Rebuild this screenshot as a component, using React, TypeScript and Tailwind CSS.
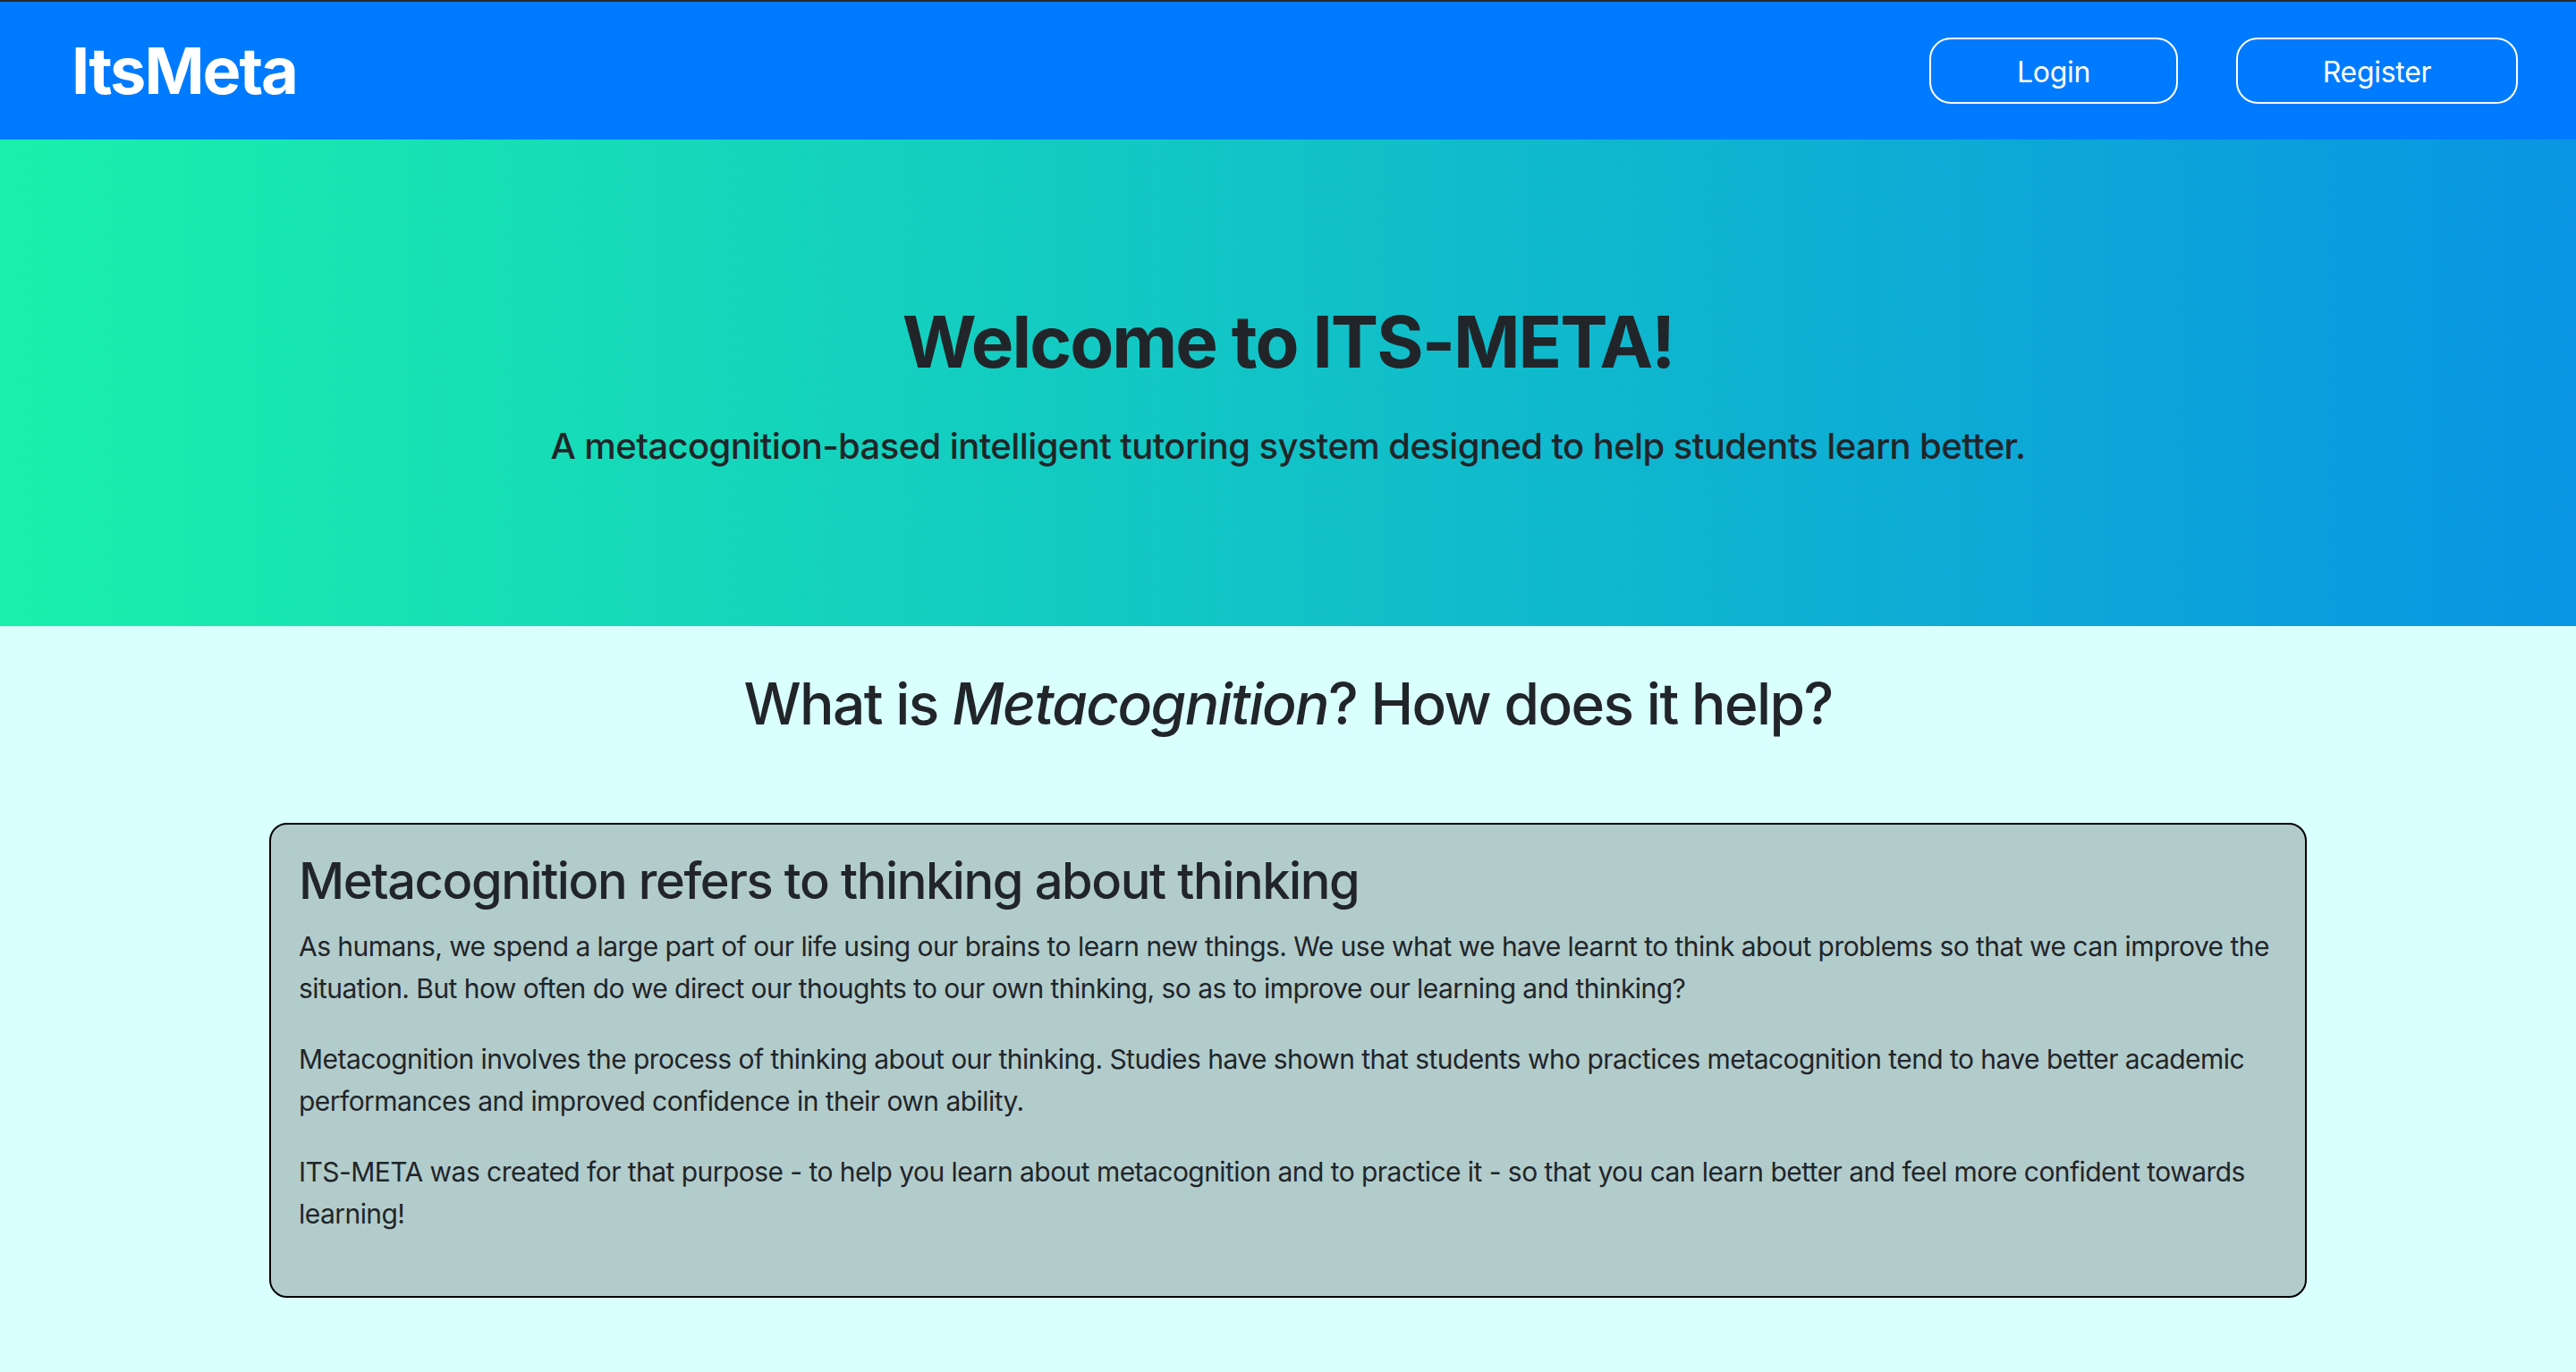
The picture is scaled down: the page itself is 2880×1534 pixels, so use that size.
import React from "react";

export default function App() {
  const font = { fontFamily: "Inter, 'Noto Sans', sans-serif" };
  return (
    <div className="min-h-[1534px] w-full bg-[#d9ffff] text-[#212529]" style={font}>
      <div className="h-[2px] bg-[#2b2b2b]" />
      <header className="flex h-[154px] items-center justify-between bg-[#007bff] pl-[80px] pr-[65px]">
        <div className="text-[72px] font-bold leading-none tracking-[-2px] text-white">ItsMeta</div>
        <div className="flex items-center gap-[65px]">
          <button className="flex h-[74px] w-[278px] items-center justify-center rounded-[24px] border-2 border-white pt-[3px] text-[32px] tracking-[-0.3px] text-white">
            Login
          </button>
          <button className="flex h-[74px] w-[315px] items-center justify-center rounded-[24px] border-2 border-white pt-[3px] text-[32px] tracking-[-0.3px] text-white">
            Register
          </button>
        </div>
      </header>
      <section className="flex h-[544px] flex-col items-center justify-center bg-[linear-gradient(to_right,#1af0ab,#0995e3)]">
        <h1 className="text-[80px] font-bold leading-[96px] tracking-[-2px]">Welcome to ITS-META!</h1>
        <h5 className="mt-[45px] text-[40px] font-medium leading-[48px] tracking-[-0.6px]">
          A metacognition-based intelligent tutoring system designed to help students learn better.
        </h5>
      </section>
      <section className="flex flex-col items-center pt-[48px]">
        <h2 className="text-[64px] font-medium leading-[77px] tracking-[-1.6px]">
          What is <em>Metacognition</em>? How does it help?
        </h2>
        <div className="mt-[95px] w-[2278px] rounded-[20px] border-2 border-black bg-[#b2cccc] px-[31px] pt-[30px] pb-[68px]">
          <h3 className="mb-[16px] text-[56px] font-medium leading-[67px] tracking-[-1.4px]">
            Metacognition refers to thinking about thinking
          </h3>
          <p className="mb-[32px] text-[30px] leading-[47px] tracking-[-0.55px]">
            As humans, we spend a large part of our life using our brains to learn new things. We use what we have learnt to think about problems so that we can improve the situation. But how often do we direct our thoughts to our own thinking, so as to improve our learning and thinking?
          </p>
          <p className="mb-[32px] text-[30px] leading-[47px] tracking-[-0.55px]">
            Metacognition involves the process of thinking about our thinking. Studies have shown that students who practices metacognition tend to have better academic performances and improved confidence in their own ability.
          </p>
          <p className="text-[30px] leading-[47px] tracking-[-0.55px]">
            ITS-META was created for that purpose - to help you learn about metacognition and to practice it - so that you can learn better and feel more confident towards learning!
          </p>
        </div>
      </section>
    </div>
  );
}
